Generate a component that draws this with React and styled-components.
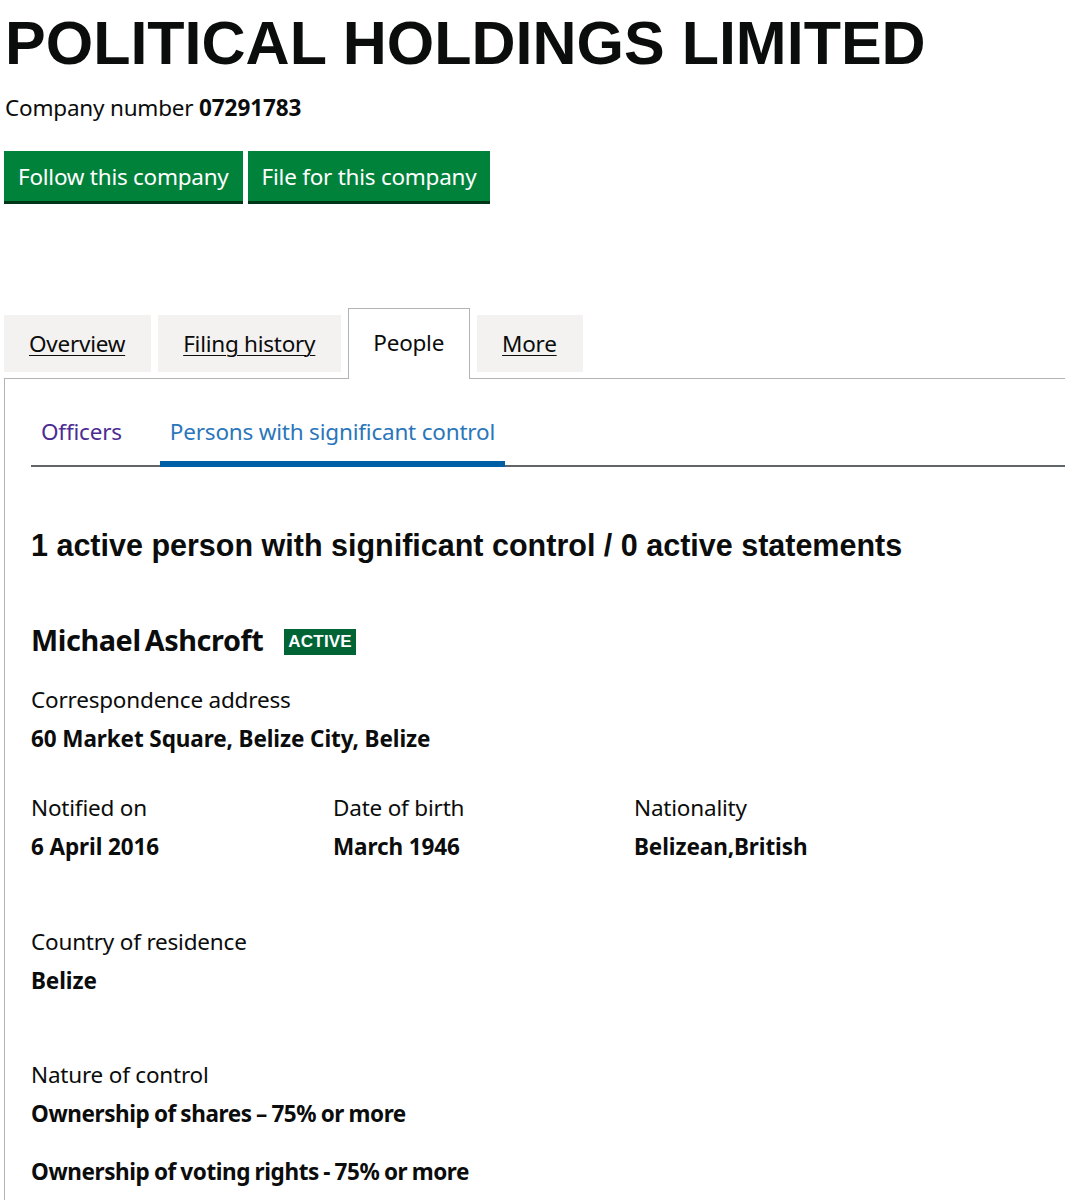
import React from "react";
import styled, { createGlobalStyle } from "styled-components";

const GlobalStyle = createGlobalStyle`
  body {
    margin: 0;
    background: #ffffff;
    color: #0b0c0c;
    font-family: "Noto Sans", "Liberation Sans", sans-serif;
    overflow-x: hidden;
  }
`;

const Page = styled.div`
  padding: 10px 0 0 4px;
  width: 1100px;
`;

const Title = styled.h1`
  margin: 0 0 0 1px;
  font-family: "Liberation Sans", Arial, sans-serif;
  font-weight: 700;
  font-size: 61px;
  line-height: 67px;
`;

const CompanyNumber = styled.p`
  margin: 16px 0 0 1px;
  font-size: 22.5px;
  line-height: 30px;
  letter-spacing: -0.2px;

  strong {
    font-weight: 700;
    letter-spacing: -0.1px;
  }
`;

const Actions = styled.div`
  display: flex;
  gap: 5px;
  margin-top: 28px;
`;

const GreenButton = styled.button`
  height: 50px;
  padding: 0 14px;
  border: none;
  border-radius: 0;
  background: #00823b;
  box-shadow: 0 3px 0 #003618;
  color: #ffffff;
  font-family: "Noto Sans", "Liberation Sans", sans-serif;
  font-size: 22.5px;
  letter-spacing: -0.25px;
  cursor: pointer;
`;

const TabList = styled.ul`
  display: flex;
  align-items: flex-start;
  gap: 7px;
  margin: 107px 0 0;
  padding: 0;
  list-style: none;
`;

const Tab = styled.li`
  display: flex;
  align-items: center;
  box-sizing: border-box;
  height: ${(p) => (p.$active ? "71px" : "57px")};
  margin-top: ${(p) => (p.$active ? "0" : "7px")};
  margin-bottom: ${(p) => (p.$active ? "-1px" : "0")};
  padding: ${(p) => (p.$active ? "0 25px 3px 24px" : "0 26px 0 25px")};
  background: ${(p) => (p.$active ? "#ffffff" : "#f3f2f1")};
  border: ${(p) => (p.$active ? "1px solid #b1b4b6" : "none")};
  border-bottom: none;
  position: relative;
  z-index: 1;
  font-size: 22.5px;
  letter-spacing: -0.25px;

  a {
    color: #0b0c0c;
    text-decoration: ${(p) => (p.$active ? "none" : "underline")};
    text-underline-offset: 3px;
    text-decoration-thickness: 1px;
  }
`;

const Panel = styled.section`
  border-top: 1px solid #b1b4b6;
  border-left: 1px solid #b1b4b6;
  padding: 29px 0 40px 26px;
`;

const SubTabs = styled.ul`
  display: flex;
  gap: 28px;
  margin: 0;
  padding: 0;
  list-style: none;
  border-bottom: 2px solid #5f6568;
`;

const SubTab = styled.li`
  margin-bottom: -2px;
  padding: 9px 10px 14px;
  border-bottom: 6px solid ${(p) => (p.$active ? "#005ea5" : "transparent")};
  font-size: 22.5px;
  line-height: 30px;
  letter-spacing: -0.2px;

  a {
    color: ${(p) => (p.$active ? "#2a76ba" : "#4c2c92")};
    text-decoration: none;
  }
`;

const Heading = styled.h2`
  margin: 58px 0 0;
  font-family: "Liberation Sans", Arial, sans-serif;
  font-weight: 700;
  font-size: 30.5px;
  line-height: 40px;
`;

const NameRow = styled.div`
  display: flex;
  align-items: center;
  gap: 21px;
  margin-top: 55px;
`;

const PersonName = styled.h3`
  margin: 0;
  font-size: 28.8px;
  line-height: 40px;
  font-weight: 700;
  letter-spacing: -0.4px;
  word-spacing: -3px;
`;

const Badge = styled.span`
  display: inline-flex;
  align-items: center;
  height: 26px;
  padding: 0 4px;
  margin-top: 4px;
  background: #006435;
  color: #ffffff;
  font-family: "Liberation Sans", Arial, sans-serif;
  font-weight: 700;
  font-size: 17px;
  letter-spacing: 0.2px;
`;

const Field = styled.dl`
  margin: ${(p) => p.$top || "0"} 0 0;
`;

const Label = styled.dt`
  font-size: 22.5px;
  line-height: 30px;
  letter-spacing: -0.2px;
`;

const Value = styled.dd`
  margin: ${(p) => p.$gap || "9px"} 0 0;
  font-size: 22.5px;
  line-height: 30px;
  font-weight: 700;
  letter-spacing: ${(p) => (p.$tight ? "-0.4px" : "-0.1px")};
  word-spacing: ${(p) => (p.$tight ? "-1px" : "0")};
`;

const Columns = styled.div`
  display: grid;
  grid-template-columns: 302px 301px 302px;
  margin-top: 39px;
`;

export default function App() {
  return (
    <>
      <GlobalStyle />
      <Page>
        <Title>POLITICAL HOLDINGS LIMITED</Title>
        <CompanyNumber>
          Company number <strong>07291783</strong>
        </CompanyNumber>
        <Actions>
          <GreenButton>Follow this company</GreenButton>
          <GreenButton>File for this company</GreenButton>
        </Actions>

        <TabList>
          <Tab><a href="#overview">Overview</a></Tab>
          <Tab><a href="#filing">Filing history</a></Tab>
          <Tab $active><a href="#people">People</a></Tab>
          <Tab><a href="#more">More</a></Tab>
        </TabList>

        <Panel>
          <SubTabs>
            <SubTab><a href="#officers">Officers</a></SubTab>
            <SubTab $active><a href="#psc">Persons with significant control</a></SubTab>
          </SubTabs>

          <Heading>1 active person with significant control / 0 active statements</Heading>

          <NameRow>
            <PersonName>Michael Ashcroft</PersonName>
            <Badge>ACTIVE</Badge>
          </NameRow>

          <Field $top="25px">
            <Label>Correspondence address</Label>
            <Value>60 Market Square, Belize City, Belize</Value>
          </Field>

          <Columns>
            <Field>
              <Label>Notified on</Label>
              <Value>6 April 2016</Value>
            </Field>
            <Field>
              <Label>Date of birth</Label>
              <Value>March 1946</Value>
            </Field>
            <Field>
              <Label>Nationality</Label>
              <Value>Belizean,British</Value>
            </Field>
          </Columns>

          <Field $top="65px">
            <Label>Country of residence</Label>
            <Value>Belize</Value>
          </Field>

          <Field $top="64px">
            <Label>Nature of control</Label>
            <Value $tight>Ownership of shares – 75% or more</Value>
            <Value $tight $gap="28px">Ownership of voting rights - 75% or more</Value>
          </Field>
        </Panel>
      </Page>
    </>
  );
}
